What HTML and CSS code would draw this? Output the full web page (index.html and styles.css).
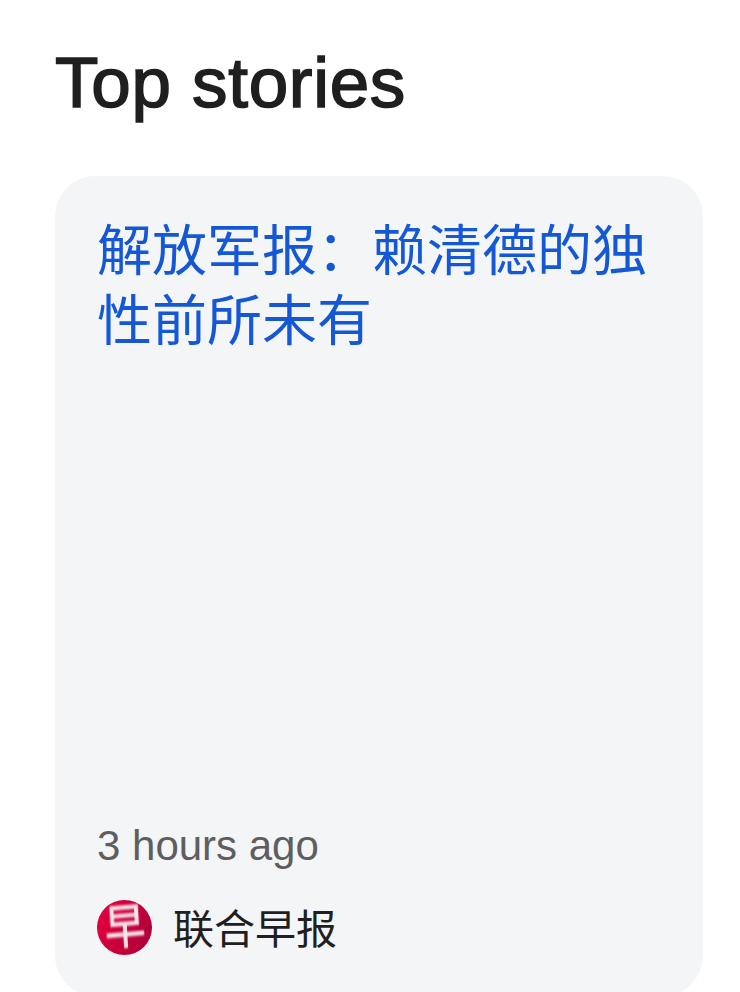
FILE: index.html
```html
<!DOCTYPE html>
<html lang="en">
    <head>
        <meta name="viewport" content="width=device-width, initial-scale=1"/>
        <meta charset="UTF-8">
        <title>Top stories</title>
        <link rel="stylesheet" href="styles.css">
    </head>
    <body>
        <h1 class="heading">Top stories</h1>
        <a class="card" href="#">
            <div class="title">解放军报：赖清德的独<br>性前所未有</div>
            <div class="time">3 hours ago</div>
            <div class="source">
                <span class="avatar"><span class="avatar_char">早</span></span>
                <span class="source_name">联合早报</span>
            </div>
        </a>
    </body>
</html>
```

FILE: styles.css
```css
html{
    height: 100%;
    overflow: hidden;
}
body{
    margin: 0;
    height: 992px;
    padding: 0 37px 0 55px;
    box-sizing: border-box;
    overflow: hidden;
    background-color: white;
    font-family: "Liberation Sans", "Noto Sans CJK SC", sans-serif;
}
.heading{
    margin: 0;
    padding-top: 41px;
    height: 176px;
    box-sizing: border-box;
    font-size: 71px;
    line-height: 84px;
    letter-spacing: 0.7px;
    font-weight: normal;
    -webkit-text-stroke: 1.6px #1f1f1f;
    color: #1f1f1f;
}
.card{
    display: flex;
    flex-direction: column;
    height: 820px;
    box-sizing: border-box;
    padding: 40px 42px 0;
    border-radius: 40px;
    background-color: #f4f5f7;
    text-decoration: none;
}
.title{
    height: 606px;
    font-size: 55px;
    line-height: 70px;
    color: #1558d6;
}
.time{
    font-size: 42px;
    line-height: 48px;
    color: #5e5e5e;
}
.source{
    display: flex;
    align-items: center;
    gap: 21px;
    margin-top: 27.5px;
}
.avatar{
    display: flex;
    align-items: center;
    justify-content: center;
    width: 55px;
    height: 55px;
    border-radius: 50%;
    overflow: hidden;
    background: linear-gradient(110deg, #e8003f, #a80038);
}
.avatar_char{
    font-size: 40px;
    line-height: 55px;
    color: #fbe4ea;
    -webkit-text-stroke: 0.8px #fbe4ea;
    transform: scaleY(1.18) rotate(-4deg);
    filter: blur(0.7px);
}
.source_name{
    margin-top: 5px;
    font-size: 41px;
    line-height: 55px;
    color: #1f1f1f;
}
```
